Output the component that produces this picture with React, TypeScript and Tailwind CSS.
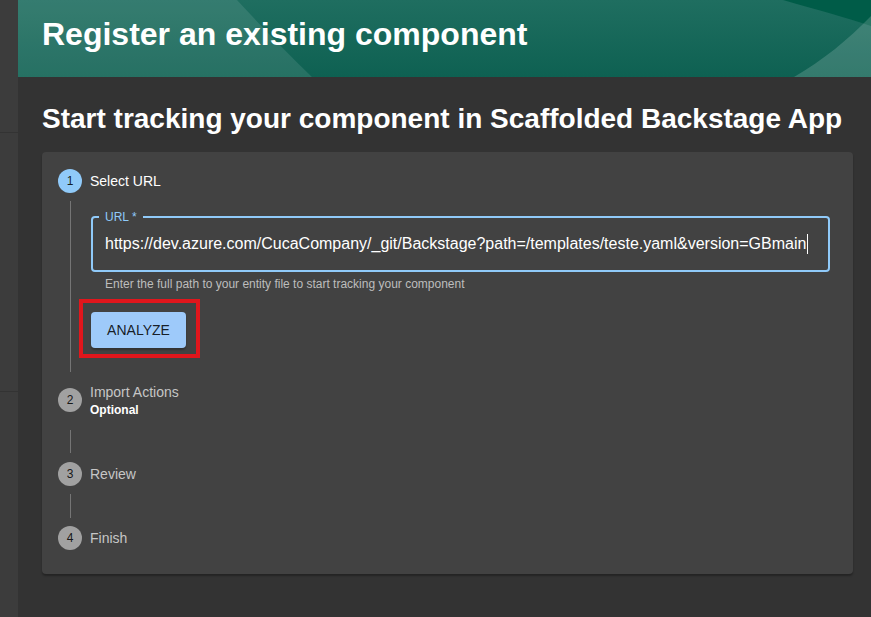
import React from "react";

const URL_VALUE =
  "https://dev.azure.com/CucaCompany/_git/Backstage?path=/templates/teste.yaml&version=GBmain";

function StepIcon({ n, active }: { n: number; active?: boolean }) {
  return (
    <div
      className={
        "flex h-6 w-6 shrink-0 items-center justify-center rounded-full text-xs text-[rgba(0,0,0,0.87)] " +
        (active ? "bg-[#90caf9]" : "bg-[#a1a1a1]")
      }
    >
      {n}
    </div>
  );
}

function Connector({ className }: { className: string }) {
  return <div className={"ml-3 border-l border-[#757575] " + className} />;
}

function HeaderArt() {
  return (
    <svg
      className="absolute inset-0 h-full w-full"
      viewBox="0 0 853 77"
      preserveAspectRatio="none"
    >
      <defs>
        <linearGradient id="hdr" x1="0" y1="0" x2="0" y2="1">
          <stop offset="0" stopColor="#1f6e60" />
          <stop offset="1" stopColor="#0e6152" />
        </linearGradient>
      </defs>
      <rect width="853" height="77" fill="url(#hdr)" />
      <path d="M0 0 H219 C245 28 268 52 294 77 H0 Z" fill="#ffffff" fillOpacity="0.1" />
      <path d="M765 0 C800 10 830 18 853 26 V0 Z" fill="#005c48" />
      <path d="M776 77 C805 60 830 40 853 16 V77 Z" fill="#ffffff" fillOpacity="0.16" />
    </svg>
  );
}

export default function App() {
  return (
    <div className="flex h-[617px] w-[871px] overflow-hidden bg-[#333333] font-['Liberation_Sans',Arial,sans-serif]">
      {/* Sidebar */}
      <aside className="flex w-[18px] shrink-0 flex-col bg-[#3c3c3c]">
        <div className="h-[133px] border-b border-[#333333]" />
        <div className="h-[259px] border-b border-[#333333]" />
      </aside>

      <main className="flex min-w-0 flex-1 flex-col">
        {/* Header */}
        <header className="relative h-[77px] shrink-0 overflow-hidden">
          <HeaderArt />
          <h1 className="relative pl-6 pt-[14px] text-[32px] font-bold leading-[40px] text-white">
            Register an existing component
          </h1>
        </header>

        <div className="pl-6 pr-[18px]">
          <h2 className="pt-[24px] text-[28px] font-bold leading-[36px] text-white">
            Start tracking your component in Scaffolded Backstage App
          </h2>

          {/* Card */}
          <section className="mt-[15px] rounded bg-[#424242] pl-4 pr-[23px] pb-[24px] pt-[17px] shadow-[0_2px_2px_rgba(0,0,0,0.3)]">
            {/* Step 1 */}
            <div className="flex h-6 items-center gap-2">
              <StepIcon n={1} active />
              <span className="text-sm text-white">Select URL</span>
            </div>
            <div className="ml-3 mt-2 border-l border-[#757575] pb-6 pl-5 pt-[15px]">
              <div className="relative h-14 rounded border-2 border-[#90caf9]">
                <span className="absolute -top-[9px] left-[6px] bg-[#424242] px-[6px] text-xs leading-4 text-[#90caf9]">
                  URL *
                </span>
                <div className="flex h-full items-center pl-3 text-base text-white">
                  <span>{URL_VALUE}</span>
                  <span className="ml-px h-[20px] w-px bg-white" />
                </div>
              </div>
              <p className="mt-1 pl-[14px] text-xs leading-4 text-[#bdbdbd]">
                Enter the full path to your entity file to start tracking your component
              </p>
              <div className="mt-5">
                <button className="relative h-9 w-[95px] rounded bg-[#9ecafa] text-sm uppercase text-[rgba(0,0,0,0.87)] shadow-[0_2px_2px_rgba(0,0,0,0.25)]">
                  Analyze
                  <span className="pointer-events-none absolute -bottom-[10px] -left-[12px] -right-[14px] -top-[13px] border-4 border-[#e1161c]" />
                </button>
              </div>
            </div>

            {/* Step 2 */}
            <div className="mt-[9px] flex h-[38px] items-center gap-2">
              <StepIcon n={2} />
              <div className="flex flex-col">
                <span className="text-sm leading-5 text-[#c6c6c6]">Import Actions</span>
                <span className="text-xs font-bold leading-4 text-white">Optional</span>
              </div>
            </div>
            <Connector className="mt-[11px] h-[23px]" />

            {/* Step 3 */}
            <div className="mt-[9px] flex h-6 items-center gap-2">
              <StepIcon n={3} />
              <span className="text-sm text-[#c6c6c6]">Review</span>
            </div>
            <Connector className="mt-2 h-6" />

            {/* Step 4 */}
            <div className="mt-2 flex h-6 items-center gap-2">
              <StepIcon n={4} />
              <span className="text-sm text-[#c6c6c6]">Finish</span>
            </div>
          </section>
        </div>
      </main>
    </div>
  );
}
